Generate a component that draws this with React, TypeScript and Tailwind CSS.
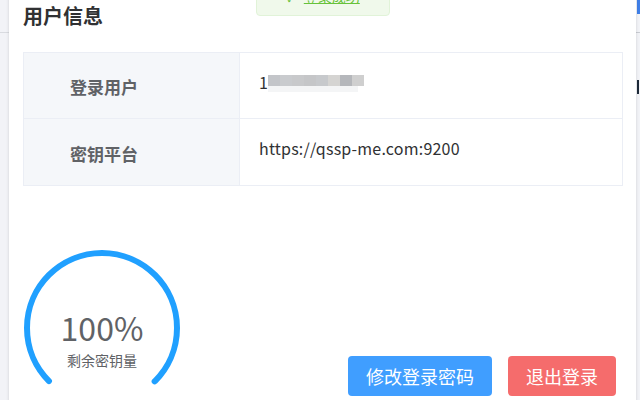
import React from 'react';

const font = { fontFamily: '"Noto Sans CJK SC", "Noto Sans", sans-serif' };

// Blurred (mosaic) user name
const maskBlocks = ['#c3c5c9', '#c9cbce', '#c8c9cb', '#c5c6c8', '#c7c9cc', '#d5d4d2', '#b5b7bb', '#cfcfcf'];

const Gauge: React.FC<{ percent: number; label: string }> = ({ percent, label }) => {
  const r = 75;
  const c = 2 * Math.PI * r;
  const arc = c * 0.75;
  return (
    <div className="relative w-[162px] h-[162px]">
      <svg width="162" height="162" viewBox="0 0 162 162" className="absolute inset-0">
        <circle
          cx="81"
          cy="81"
          r={r}
          fill="none"
          stroke="#20a0ff"
          strokeWidth="6"
          strokeLinecap="round"
          strokeDasharray={`${(arc * percent) / 100} ${c}`}
          transform="rotate(135 81 81)"
        />
      </svg>
      <div className="absolute inset-x-0 top-[62px] text-center text-[32px] leading-[36px] text-[#606266]">{percent}%</div>
      <div className="absolute inset-x-0 top-[104px] text-center text-[14px] leading-[18px] text-[#606266]">{label}</div>
    </div>
  );
};

export default function App() {
  return (
    <div className="relative w-[640px] h-[400px] overflow-hidden bg-[#f2f3f7]" style={font}>
      {/* page behind the dialog */}
      <div className="absolute left-0 top-[32px] w-[9px] h-px bg-[#d9dbe0]" />
      <div className="absolute right-0 top-0 w-[3px] h-[14px] bg-[#3f7fe8]" />
      <div className="absolute right-0 top-[32px] w-[4px] h-px bg-[#c9ccd2]" />
      <div className="absolute right-[1px] top-[80px] w-[2px] h-[14px] bg-[#1e2a3a]" />

      {/* dialog */}
      <div className="absolute left-[9px] top-[-20px] w-[627px] h-[440px] bg-white shadow-[0_1px_3px_rgba(0,0,0,0.15)] pt-[20px] pl-[14px] pr-[14px]">
        <div className="h-[32px] flex items-center text-[20px] font-bold text-[#303133]">用户信息</div>

        <div className="mt-[20px] border border-[#ebeef5] w-[600px]">
          <div className="flex h-[66px] border-b border-[#ebeef5]">
            <div className="w-[216px] bg-[#f5f7fa] border-r border-[#ebeef5] flex items-center pl-[46px] pt-[2px] text-[17px] font-bold text-[#606266]">
              登录用户
            </div>
            <div className="flex-1 pl-[19px] pt-[20px] flex items-start">
              <span className="text-[16px] leading-[18px] text-[#303133]">1</span>
              <div className="flex flex-col">
                <div className="flex h-[11px] mt-[2px]">
                  {maskBlocks.map((c, i) => (
                    <div key={i} className="w-[12px] h-full" style={{ background: c }} />
                  ))}
                </div>
                <div className="h-[6px] w-[90px] bg-[#f4f5f6]" />
              </div>
            </div>
          </div>
          <div className="flex h-[66px]">
            <div className="w-[216px] bg-[#f5f7fa] border-r border-[#ebeef5] flex items-center pl-[46px] pt-[4px] text-[17px] font-bold text-[#606266]">
              密钥平台
            </div>
            <div className="flex-1 pl-[19px] pt-[18px] text-[16px] leading-[22px] tracking-[0.2px] text-[#303133]">
              https://qssp-me.com:9200
            </div>
          </div>
        </div>

        <div className="mt-[61px] flex items-start">
          <div className="ml-[-2px]">
            <Gauge percent={100} label="剩余密钥量" />
          </div>
          <div className="ml-auto mr-[6px] mt-[109px] flex gap-[16px]">
            <button className="w-[144px] h-[40px] rounded-[4px] bg-[#409eff] text-white text-[18px]">修改登录密码</button>
            <button className="w-[108px] h-[40px] rounded-[4px] bg-[#f56c6c] text-white text-[18px]">退出登录</button>
          </div>
        </div>
      </div>

      {/* success toast */}
      <div className="absolute left-[256px] top-[-24px] w-[134px] h-[40px] rounded-[4px] border border-[#e1f3d8] bg-[#f0f9eb] flex items-center justify-center gap-[8px] text-[#67c23a]">
        <span className="text-[14px]">✓</span>
        <span className="text-[14px] underline">登录成功</span>
      </div>
    </div>
  );
}
